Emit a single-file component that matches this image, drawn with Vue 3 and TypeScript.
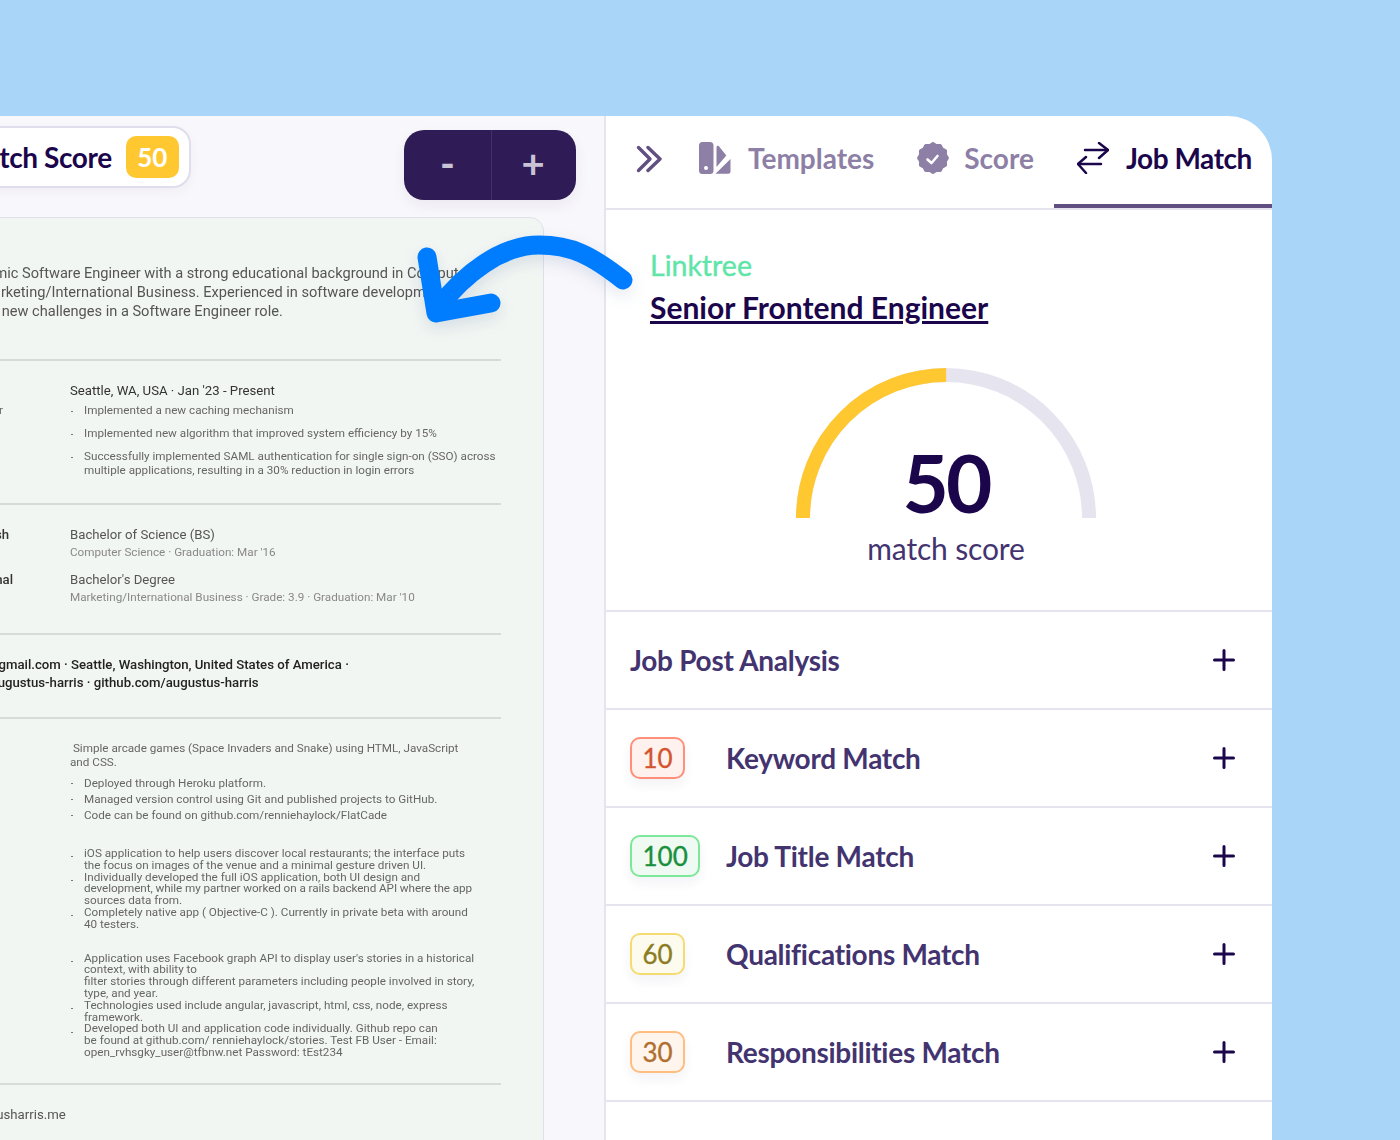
<script setup lang="ts">
import { computed } from 'vue'

interface MatchRow {
  score: number
  label: string
  tone: string
}

const matchRows: MatchRow[] = [
  { score: 10, label: 'Keyword Match', tone: 'red' },
  { score: 100, label: 'Job Title Match', tone: 'green' },
  { score: 60, label: 'Qualifications Match', tone: 'yellow' },
  { score: 30, label: 'Responsibilities Match', tone: 'orange' }
]

// scalloped outline of the "Score" tab badge
const badgePath = computed(() => {
  const lobes = 12
  const points: string[] = []
  for (let i = 0; i <= 120; i++) {
    const a = (i / 120) * Math.PI * 2
    const r = 15.2 + Math.cos(a * lobes) * 0.7
    points.push(`${(16 + r * Math.cos(a)).toFixed(2)} ${(16 + r * Math.sin(a)).toFixed(2)}`)
  }
  return `M${points.join('L')}Z`
})

// yellow part of the gauge, score out of 100 over a half circle
const gaugeScore = 50
const gaugeLength = Math.PI * 143
const gaugeDash = computed(() => `${(gaugeLength * gaugeScore) / 100} ${gaugeLength}`)
</script>

<template>
  <div class="page">
    <div class="panel">
      <section class="preview">
        <header class="preview-top">
          <div class="score-pill">
            <span class="score-pill-text">Match Score</span>
            <span class="score-pill-num">50</span>
          </div>
          <div class="zoom-btns">
            <button class="zoom-btn">-</button>
            <button class="zoom-btn zoom-plus">+</button>
          </div>
        </header>

        <div class="sheet">
          <div class="block block-summary">
            <p class="summary">
              <span class="summary-first">Dynamic Software Engineer with a strong educational background in Computer</span><br />
              in Marketing/International Business. Experienced in software development<br />
              meet new challenges in a Software Engineer role.
            </p>
          </div>

          <div class="block block-work">
            <div class="row">
              <div class="label label-job"><span>Software Engineer</span></div>
              <div class="body">
                <div class="where">Seattle, WA, USA · Jan '23 - Present</div>
                <ul class="list list-wide">
                  <li>Implemented a new caching mechanism</li>
                  <li>Implemented new algorithm that improved system efficiency by 15%</li>
                  <li>Successfully implemented SAML authentication for single sign-on (SSO) across<br />multiple applications, resulting in a 30% reduction in login errors</li>
                </ul>
              </div>
            </div>
          </div>

          <div class="block block-edu">
            <div class="row">
              <div class="label label-bold label-sh"><span>University of Polish</span></div>
              <div class="body">
                <div class="degree">Bachelor of Science (BS)</div>
                <div class="degree-sub">Computer Science · Graduation: Mar '16</div>
              </div>
            </div>
            <div class="row row-second">
              <div class="label label-bold label-nal"><span>Global International</span></div>
              <div class="body">
                <div class="degree">Bachelor's Degree</div>
                <div class="degree-sub">Marketing/International Business · Grade: 3.9 · Graduation: Mar '10</div>
              </div>
            </div>
          </div>

          <div class="block block-contact">
            <p class="contact">
              <span class="contact-a">augustus.harris@gmail.com · Seattle, Washington, United States of America ·</span><br />
              <span class="contact-b">linkedin.com/in/augustus-harris · github.com/augustus-harris</span>
            </p>
          </div>

          <div class="block block-projects">
            <div class="project-text">
              <p class="project-intro">&nbsp;Simple arcade games (Space Invaders and Snake) using HTML, JavaScript<br />and CSS.</p>
              <ul class="list list-mid">
                <li>Deployed through Heroku platform.</li>
                <li>Managed version control using Git and published projects to GitHub.</li>
                <li>Code can be found on github.com/renniehaylock/FlatCade</li>
              </ul>
              <ul class="list list-tight list-two">
                <li>iOS application to help users discover local restaurants; the interface puts<br />the focus on images of the venue and a minimal gesture driven UI.</li>
                <li>Individually developed the full iOS application, both UI design and<br /><span class="squeeze">development, while my partner worked on a rails backend API where the app</span><br />sources data from.</li>
                <li>Completely native app ( Objective-C ). Currently in private beta with around<br />40 testers.</li>
              </ul>
              <ul class="list list-tight list-three">
                <li>Application uses Facebook graph API to display user's stories in a historical<br />context, with ability to<br />filter stories through different parameters including people involved in story,<br />type, and year.</li>
                <li>Technologies used include angular, javascript, html, css, node, express<br />framework.</li>
                <li>Developed both UI and application code individually. Github repo can<br />be found at github.com/ renniehaylock/stories. Test FB User - Email:<br />open_rvhsgky_user@tfbnw.net Password: tEst234</li>
              </ul>
            </div>
          </div>

          <div class="block-foot">
            <span class="foot-text">augustusharris.me</span>
          </div>
        </div>
      </section>

      <section class="side">
        <nav class="tabs">
          <svg class="tab-collapse" viewBox="0 0 26 28" fill="none" stroke="#614f82" stroke-width="3.4" stroke-linecap="round" stroke-linejoin="round">
            <path d="M2.5 2.5 14 14 2.5 25.500" />
            <path d="M12 2.500 24 14 12 25.500" />
          </svg>
          <a class="tab tab-templates">
            <svg class="tab-icon" viewBox="0 0 32 32" fill="#8d7fa5">
              <path fill-rule="evenodd" d="M3.500 0h7.500a3.500 3.500 0 0 1 3.500 3.500v25a3.500 3.500 0 0 1-3.500 3.500h-7.500a3.500 3.500 0 0 1-3.500-3.500v-25a3.500 3.500 0 0 1 3.500-3.500zM7 24a2 2 0 1 0 0 4 2 2 0 0 0 0-4z" />
              <path d="M17.500 5.500c0-1.500 1.300-2.300 2.400-1.200l7.400 9.200-9.800 11.500z" />
              <path d="M31.500 17v12.300a2.500 2.500 0 0 1-2.500 2.500H16.500z" />
            </svg>
            Templates
          </a>
          <a class="tab tab-score">
            <svg class="tab-icon" viewBox="0 0 32 32">
              <path :d="badgePath" fill="#8d7fa5" />
              <path d="M10.500 17.500l4 3.500 6-7" fill="none" stroke="#fff" stroke-width="2.600" stroke-linecap="round" stroke-linejoin="round" />
            </svg>
            Score
          </a>
          <a class="tab tab-job active">
            <svg class="tab-icon" viewBox="0 0 32 32" fill="none" stroke="#1b064c" stroke-width="2.500" stroke-linecap="round" stroke-linejoin="round">
              <path d="M8 8h23" />
              <path d="M22 1l9 7-9 8" />
              <path d="M1 22h23" />
              <path d="M9 15l-8 7 8 9" />
            </svg>
            Job Match
          </a>
        </nav>

        <div class="job">
          <div class="company">Linktree</div>
          <a class="job-title">Senior Frontend Engineer</a>
        </div>

        <div class="gauge">
          <svg class="gauge-arc" viewBox="0 0 300 150" fill="none" stroke-width="14">
            <path d="M7 150a143 143 0 0 1 286 0" stroke="#e6e5ef" />
            <path d="M7 150a143 143 0 0 1 286 0" stroke="#ffc831" :stroke-dasharray="gaugeDash" />
          </svg>
          <div class="gauge-num">{{ gaugeScore }}</div>
          <div class="gauge-label">match score</div>
        </div>

        <div class="accordion">
          <div class="acc-row">
            <span class="acc-title">Job Post Analysis</span>
            <svg class="acc-plus" viewBox="0 0 22 22" stroke="#1b064c" stroke-width="3" stroke-linecap="round">
              <path d="M11 1.500v19M1.500 11h19" />
            </svg>
          </div>
          <div v-for="row in matchRows" :key="row.label" class="acc-row">
            <span class="acc-badge-col">
              <span class="acc-badge" :class="row.tone">{{ row.score }}</span>
            </span>
            <span class="acc-title">{{ row.label }}</span>
            <svg class="acc-plus" viewBox="0 0 22 22" stroke="#1b064c" stroke-width="3" stroke-linecap="round">
              <path d="M11 1.500v19M1.500 11h19" />
            </svg>
          </div>
        </div>
      </section>

      <svg class="big-arrow" viewBox="0 0 240 120" fill="none" stroke="#007cff" stroke-width="19" stroke-linecap="round" stroke-linejoin="round">
        <path d="M222 51C190 26 170 16 138 16 100 16 62 46 38 78" />
        <path d="M26 28 35 84 90 74" />
      </svg>
    </div>
  </div>
</template>

<style>
body {
  margin: 0;
  background: #a9d5f9;
}
</style>

<style scoped>
.page {
  height: 1140px;
  padding-top: 116px;
  box-sizing: border-box;
  overflow: hidden;
  font-family: Lato, "Liberation Sans", sans-serif;
}

.panel {
  position: relative;
  width: 1272px;
  height: 1024px;
  display: flex;
  background: #fff;
  border-top-right-radius: 44px;
  overflow: hidden;
}

.preview {
  width: 604px;
  flex-shrink: 0;
  background: #f8f7fb;
  border-right: 2px solid #e6e5ef;
  overflow: hidden;
}

.preview-top {
  display: flex;
  justify-content: space-between;
  padding: 10px 28px 0 0;
  height: 91px;
}

.score-pill {
  display: flex;
  align-items: center;
  gap: 14px;
  height: 62px;
  box-sizing: border-box;
  margin-left: -62px;
  padding: 0 10px 0 20px;
  background: #fff;
  border: 2px solid #e0deec;
  border-radius: 18px;
  box-shadow: 0 4px 12px rgba(47, 27, 85, 0.04);
}

.score-pill-text {
  font-size: 28px;
  font-weight: 700;
  letter-spacing: -0.4px;
  color: #1b064c;
}

.score-pill-num {
  display: flex;
  align-items: center;
  justify-content: center;
  width: 53px;
  height: 42px;
  border-radius: 10px;
  background: #ffc831;
  color: #fff;
  font-size: 26px;
  font-weight: 700;
}

.zoom-btns {
  display: flex;
  width: 172px;
  height: 70px;
  margin-top: 4px;
  border-radius: 20px;
  background: #2f1b55;
  box-shadow: 0 6px 14px rgba(47, 27, 85, 0.06);
}

.zoom-btn {
  flex: 1;
  border: 0;
  padding: 0 0 4px;
  background: transparent;
  color: #c9c3d6;
  font-family: inherit;
  font-size: 40px;
  font-weight: 700;
}

.zoom-plus {
  flex: 0 0 85px;
  padding-right: 2px;
  border-left: 1px solid #43315f;
}

.sheet {
  position: relative;
  width: 600px;
  height: 960px;
  margin-left: -56px;
  box-sizing: border-box;
  padding: 0 42px 0 0;
  background: #f2f6f3;
  border: 1px solid #e0e0e8;
  border-radius: 14px;
  font-family: Roboto, "Liberation Sans", sans-serif;
  filter: blur(0.3px);
}

.block {
  border-bottom: 2px solid #d8dbd9;
}

.block-summary {
  height: 143px;
  box-sizing: border-box;
  padding-top: 46px;
}

.summary {
  margin: 0;
  padding-left: 20px;
  font-size: 14.6px;
  line-height: 19px;
  color: #555;
  white-space: nowrap;
}

.summary-first {
  margin-left: -3px;
}

.block-work {
  height: 144px;
  box-sizing: border-box;
  padding-top: 21px;
}

.row {
  display: grid;
  grid-template-columns: 125px 1fr;
}

/* labels end near the clipped edge, so overflow has to run to the left */
.label {
  display: flex;
  justify-content: flex-end;
  white-space: nowrap;
}

.label-job {
  padding: 21px 67px 0 0;
  font-size: 11.7px;
  color: #666;
}

.label-bold {
  font-size: 13.2px;
  font-weight: 500;
  color: #333;
  padding-top: 1px;
}

.label-sh {
  padding-right: 61px;
}

.label-nal {
  padding-right: 57px;
}

.where {
  font-size: 13.2px;
  line-height: 18px;
  color: #333;
}

.list {
  margin: 0;
  padding: 0 0 0 14px;
  list-style: none;
  font-size: 11.7px;
  color: #666;
}

.list li {
  position: relative;
}

.list li::before {
  content: '';
  position: absolute;
  left: -13px;
  top: 0.7em;
  width: 2px;
  height: 1px;
  background: #777;
}

.squeeze {
  letter-spacing: -0.08px;
}

.list-wide {
  margin-top: 3px;
  line-height: 14px;
}

.list-wide li {
  margin-bottom: 9px;
}

.block-edu {
  height: 130px;
  box-sizing: border-box;
  padding-top: 21px;
}

.row-second {
  margin-top: 10px;
}

.degree {
  font-size: 13.2px;
  line-height: 17px;
  color: #555;
}

.degree-sub {
  font-size: 11.7px;
  line-height: 18px;
  color: #888;
}

.block-contact {
  height: 84px;
  box-sizing: border-box;
  padding-top: 21px;
}

.contact {
  margin: 0;
  font-size: 13.2px;
  font-weight: 500;
  line-height: 18px;
  color: #222;
  white-space: nowrap;
}

.contact-a {
  margin-left: -50.5px;
}

.contact-b {
  margin-left: -51px;
}

.block-projects {
  height: 366px;
  box-sizing: border-box;
  padding: 22px 0 0 125px;
}

.project-intro {
  margin: 0;
  font-size: 11.7px;
  line-height: 14px;
  color: #666;
}

.list-mid {
  margin-top: 6px;
  line-height: 16px;
}

.list-tight {
  line-height: 11.8px;
}

.list-two {
  margin-top: 25px;
}

.list-three {
  margin-top: 22px;
}

.block-foot {
  padding-top: 22px;
}

.foot-text {
  display: block;
  margin-left: 11px;
  font-size: 13.2px;
  color: #555;
}

.side {
  flex: 1;
  min-width: 0;
}

.tabs {
  display: flex;
  align-items: center;
  height: 94px;
  box-sizing: border-box;
  border-bottom: 2px solid #e6e5ef;
}

.tab-collapse {
  width: 26px;
  height: 28px;
  margin: 0 37px 7px 30px;
  flex-shrink: 0;
}

.tab {
  display: flex;
  align-items: center;
  height: 92px;
  box-sizing: border-box;
  padding-bottom: 8px;
  font-size: 28px;
  font-weight: 700;
  color: #8d7fa5;
  white-space: nowrap;
}

.tab-icon {
  width: 32px;
  height: 32px;
  flex-shrink: 0;
  margin-right: 17px;
}

.tab-score {
  margin-left: 43px;
}

.tab-score .tab-icon {
  margin-right: 15px;
}

.tab-job {
  flex: 1;
  margin-left: 20px;
  padding-left: 23px;
  padding-bottom: 4px;
  letter-spacing: -0.45px;
  color: #1b064c;
  border-bottom: 4px solid #614f82;
}

.job {
  padding: 39px 0 0 44px;
}

.company {
  font-size: 28.5px;
  line-height: 32px;
  color: #5fe5a8;
  -webkit-text-stroke: 0.4px #5fe5a8;
}

.job-title {
  display: inline-block;
  margin-top: 8px;
  font-size: 30px;
  line-height: 36px;
  font-weight: 700;
  color: #1b064c;
  text-decoration: underline;
}

.gauge {
  position: relative;
  width: 300px;
  height: 200px;
  margin: 43px 0 0 190px;
  text-align: center;
}

.gauge-arc {
  display: block;
  width: 300px;
  height: 150px;
}

.gauge-num {
  position: absolute;
  left: 0;
  right: 0;
  top: 66px;
  font-size: 80px;
  line-height: 96px;
  font-weight: 700;
  letter-spacing: -3px;
  color: #1b064c;
}

.gauge-label {
  margin-top: 12px;
  font-size: 30px;
  line-height: 36px;
  letter-spacing: -0.15px;
  color: #433470;
}

.accordion {
  margin-top: 42px;
  border-top: 2px solid #e6e5ef;
}

.acc-row {
  display: flex;
  align-items: center;
  height: 98px;
  box-sizing: border-box;
  padding: 0 37px 0 24px;
  border-bottom: 2px solid #e6e5ef;
}

.acc-title {
  flex: 1;
  font-size: 28px;
  font-weight: 700;
  letter-spacing: -0.28px;
  color: #433470;
}

.acc-plus {
  width: 22px;
  height: 22px;
  flex-shrink: 0;
}

.acc-badge-col {
  flex: 0 0 96px;
}

.acc-badge {
  display: inline-block;
  height: 42px;
  box-sizing: border-box;
  padding: 0 10.5px;
  border: 2px solid;
  border-radius: 10px;
  font-size: 26px;
  line-height: 38px;
  -webkit-text-stroke: 0.35px currentColor;
  box-shadow: 0 6px 12px rgba(47, 27, 85, 0.06);
}

.acc-badge.red {
  border-color: #ff8f78;
  background: #fff1ee;
  color: #d2552f;
}

.acc-badge.green {
  border-color: #7de79a;
  background: #effbf2;
  color: #1a8f3c;
}

.acc-badge.yellow {
  border-color: #f4dc72;
  background: #fdfbee;
  color: #8c7d22;
}

.acc-badge.orange {
  border-color: #ffbd7f;
  background: #fff5ec;
  color: #b06f30;
}

.big-arrow {
  position: absolute;
  left: 401px;
  top: 113px;
  width: 240px;
  height: 120px;
  overflow: visible;
  filter: drop-shadow(0 6px 8px rgba(20, 60, 120, 0.12));
}
</style>
